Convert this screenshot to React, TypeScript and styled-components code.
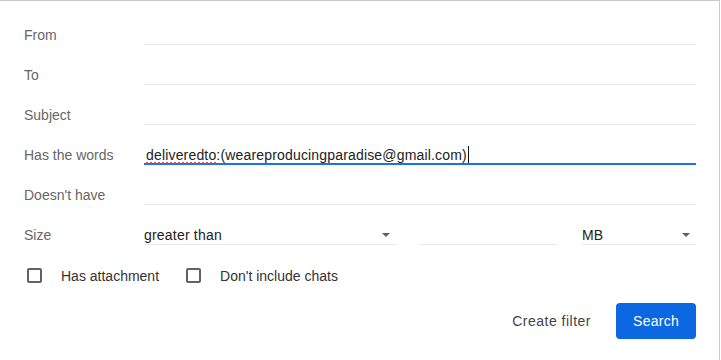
import React from "react";
import styled, { createGlobalStyle } from "styled-components";

const GlobalStyle = createGlobalStyle`
  html, body { margin: 0; padding: 0; background: #ffffff; }
  body { font-family: "Liberation Sans", Arial, sans-serif; }
  * { box-sizing: border-box; }
`;

const Dialog = styled.div`
  width: 720px;
  height: 360px;
  border-top: 1px solid #cacaca;
  border-right: 1px solid #cacaca;
  padding: 4px 23px 0 24px;
  font-family: "Liberation Sans", Arial, sans-serif;
  font-size: 14px;
  background: #fff;
`;

const Row = styled.div`
  display: grid;
  grid-template-columns: 120px 1fr;
  height: 40px;
  align-items: end;
`;

const Label = styled.div`
  color: #666666;
  line-height: 20px;
  height: 20px;
`;

const Field = styled.div<{ $focused?: boolean }>`
  height: 40px;
  display: flex;
  align-items: flex-end;
  line-height: 16px;
  padding: 0 2px;
  color: #222;
  letter-spacing: 0.17px;
  border-bottom: ${(p) => (p.$focused ? "2px solid #1a73e8" : "1px solid #ebebeb")};
`;

const Misspelled = styled.span`
  text-decoration: underline dotted #e5483d;
  text-decoration-thickness: 2px;
  text-underline-offset: 2px;
`;

const Caret = styled.span`
  display: inline-block;
  width: 1px;
  height: 17px;
  background: #111;
  margin-left: 1px;
`;

const SizeControls = styled.div`
  display: flex;
  gap: 24px;
  height: 40px;
  align-items: flex-end;
`;

const Select = styled.div<{ $width: number }>`
  width: ${(p) => p.$width}px;
  height: 40px;
  display: flex;
  align-items: flex-end;
  justify-content: space-between;
  line-height: 18px;
  padding: 0 6px 0 0;
  color: #222;
  letter-spacing: 0.2px;
  border-bottom: 1px solid #ebebeb;
`;

const Arrow = styled.span`
  width: 0;
  height: 0;
  border-left: 4px solid transparent;
  border-right: 4px solid transparent;
  border-top: 4px solid #5f5f5f;
  margin-bottom: 7px;
`;

const NumberBox = styled.div<{ $width: number }>`
  width: ${(p) => p.$width}px;
  height: 40px;
  border-bottom: 1px solid #ebebeb;
`;

const Checks = styled.div`
  display: flex;
  gap: 24px;
  margin-top: 20px;
  height: 20px;
  align-items: center;
`;

const CheckItem = styled.label`
  display: flex;
  align-items: center;
  gap: 19px;
  color: #333;
  line-height: 20px;
`;

const CheckText = styled.span`
  padding-top: 2px;
`;

const Box = styled.span`
  width: 15px;
  height: 15px;
  margin-left: 3px;
  border: 2px solid #5f6368;
  border-radius: 2px;
`;

const Actions = styled.div`
  display: flex;
  justify-content: flex-end;
  gap: 13px;
  margin-top: 18px;
`;

const TextButton = styled.button`
  height: 36px;
  padding: 0 12px;
  border: none;
  background: transparent;
  font-family: "Liberation Sans", Arial, sans-serif;
  font-size: 14px;
  letter-spacing: 0.5px;
  color: #444;
`;

const PrimaryButton = styled.button`
  width: 80px;
  height: 36px;
  border: none;
  border-radius: 4px;
  background: #0b67e2;
  color: #fff;
  font-family: "Liberation Sans", Arial, sans-serif;
  font-size: 14px;
  letter-spacing: 0.25px;
`;

const textRows = ["From", "To", "Subject"];

export default function App() {
  return (
    <>
      <GlobalStyle />
      <Dialog>
        {textRows.map((r) => (
          <Row key={r}>
            <Label>{r}</Label>
            <Field />
          </Row>
        ))}
        <Row>
          <Label>Has the words</Label>
          <Field $focused>
            <span>
              <Misspelled>deliveredto</Misspelled>:(weareproducingparadise@gmail.com)
            </span>
            <Caret />
          </Field>
        </Row>
        <Row>
          <Label>Doesn't have</Label>
          <Field />
        </Row>
        <Row>
          <Label>Size</Label>
          <SizeControls>
            <Select $width={252}>
              <span>greater than</span>
              <Arrow />
            </Select>
            <NumberBox $width={138} />
            <Select $width={114}>
              <span>MB</span>
              <Arrow />
            </Select>
          </SizeControls>
        </Row>
        <Checks>
          <CheckItem>
            <Box />
            <CheckText>Has attachment</CheckText>
          </CheckItem>
          <CheckItem>
            <Box />
            <CheckText>Don't include chats</CheckText>
          </CheckItem>
        </Checks>
        <Actions>
          <TextButton>Create filter</TextButton>
          <PrimaryButton>Search</PrimaryButton>
        </Actions>
      </Dialog>
    </>
  );
}
